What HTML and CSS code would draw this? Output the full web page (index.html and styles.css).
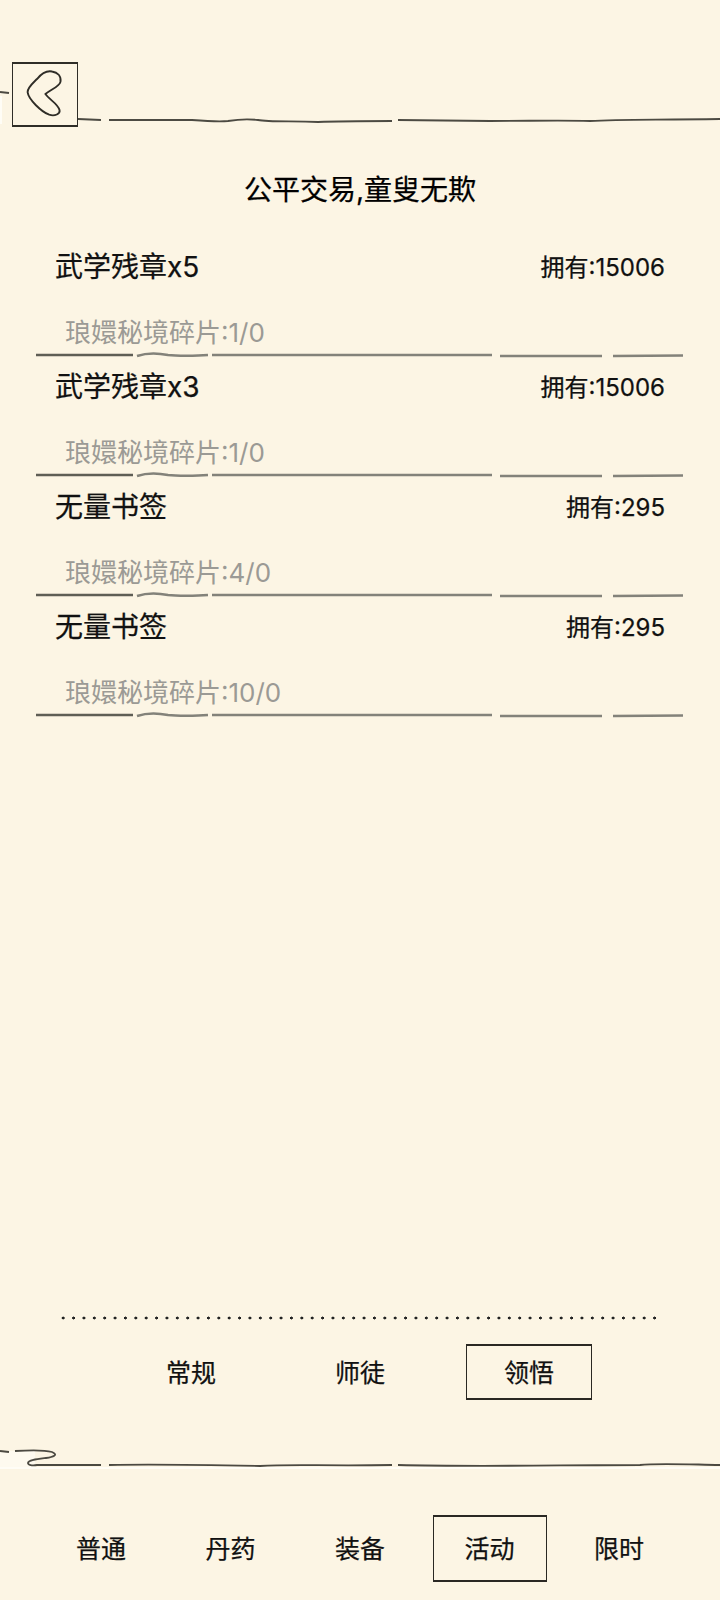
FILE: index.html
```html
<!doctype html>
<html lang="zh">

<head>
  <meta charset="utf-8">
  <title>公平交易</title>
  <link rel="stylesheet" href="styles.css">
</head>

<body>
  <div class="page">
    <div class="header">
      <svg class="header-line" viewBox="0 0 720 80" preserveAspectRatio="none">
        <path d="M0 37L9 38" />
        <path d="M78 64L101 65M109 65L192 65C205 66 218 67 228 66C240 64 250 64 258 65C268 67 290 66 318 67C340 66 360 66 392 66M398 65L490 66C530 66 560 65 590 66C620 64 650 65 720 64" />
      </svg>
      <button class="back-btn">
        <svg viewBox="0 0 66 66" width="63" height="62">
          <path class="chevron" d="M25 16C30 10 36 7 41 8C47 9 51 13 50 19C49 24 40 27 34 32C38 38 47 42 49 49C50 53 44 56 38 54C30 51 16 38 15 30C15 25 20 21 25 16Z" />
        </svg>
      </button>
    </div>

    <h1 class="title">公平交易,童叟无欺</h1>

    <div class="list">
      <div class="item">
        <div class="item-top">
          <span class="item-name">武学残章x5</span>
          <span class="item-own">拥有:15006</span>
        </div>
        <div class="item-cost">琅嬛秘境碎片:1/0</div>
        <svg class="item-line" viewBox="0 0 648 6" preserveAspectRatio="none">
          <path class="ink-bold" d="M0 3L97 3" />
          <path d="M101 4C110 1 122 1 132 3C140 4 160 4 172 3M176 3L456 3M464 4L566 4M577 4L647 3.500" />
        </svg>
      </div>
      <div class="item">
        <div class="item-top">
          <span class="item-name">武学残章x3</span>
          <span class="item-own">拥有:15006</span>
        </div>
        <div class="item-cost">琅嬛秘境碎片:1/0</div>
        <svg class="item-line" viewBox="0 0 648 6" preserveAspectRatio="none">
          <path class="ink-bold" d="M0 3L97 3" />
          <path d="M101 4C110 1 122 1 132 3C140 4 160 4 172 3M176 3L456 3M464 4L566 4M577 4L647 3.500" />
        </svg>
      </div>
      <div class="item">
        <div class="item-top">
          <span class="item-name">无量书签</span>
          <span class="item-own">拥有:295</span>
        </div>
        <div class="item-cost">琅嬛秘境碎片:4/0</div>
        <svg class="item-line" viewBox="0 0 648 6" preserveAspectRatio="none">
          <path class="ink-bold" d="M0 3L97 3" />
          <path d="M101 4C110 1 122 1 132 3C140 4 160 4 172 3M176 3L456 3M464 4L566 4M577 4L647 3.500" />
        </svg>
      </div>
      <div class="item">
        <div class="item-top">
          <span class="item-name">无量书签</span>
          <span class="item-own">拥有:295</span>
        </div>
        <div class="item-cost">琅嬛秘境碎片:10/0</div>
        <svg class="item-line" viewBox="0 0 648 6" preserveAspectRatio="none">
          <path class="ink-bold" d="M0 3L97 3" />
          <path d="M101 4C110 1 122 1 132 3C140 4 160 4 172 3M176 3L456 3M464 4L566 4M577 4L647 3.500" />
        </svg>
      </div>
    </div>

    <div class="dots"></div>

    <div class="sub-tabs">
      <div class="tab">常规</div>
      <div class="tab">师徒</div>
      <div class="tab active">领悟</div>
    </div>

    <div class="divider">
      <svg viewBox="0 0 720 20" preserveAspectRatio="none">
        <path d="M0 4L9 5M15 4C30 3 45 3 52 5C59 8 53 10 46 11C38 12 28 13 28 16C28 18 32 19 37 18L101 18M109 18C160 17 210 18 260 19C290 17 320 19 392 18M398 18C480 20 560 18 640 18C655 16 675 17 720 18" />
      </svg>
    </div>

    <div class="main-tabs">
      <div class="tab">普通</div>
      <div class="tab">丹药</div>
      <div class="tab">装备</div>
      <div class="tab active">活动</div>
      <div class="tab">限时</div>
    </div>
  </div>
</body>

</html>
```

FILE: styles.css
```css
body {
  margin: 0;
  background-color: #fcf5e4;
  color: #111;
  font-family: Inter, "Noto Sans CJK SC", sans-serif;
  -webkit-text-stroke: 0.25px;
}

.page {
  display: flex;
  flex-direction: column;
  height: 1600px;
  overflow: hidden;
  box-sizing: border-box;
}

svg {
  display: block;
  fill: none;
  stroke: #4c4a42;
  stroke-width: 1.800;
}

/* header */
.header {
  position: relative;
  height: 128px;
  padding: 62px 0 0 12px;
  box-sizing: border-box;
}

.header::before {
  content: " ";
  position: absolute;
  left: 0;
  top: 96px;
  width: 2px;
  height: 28px;
  background-color: #fffdf6;
}

.header-line {
  position: absolute;
  top: 55px;
  left: 0;
  width: 720px;
  height: 80px;
}

.back-btn {
  position: relative;
  display: block;
  width: 66px;
  height: 65px;
  padding: 0;
  background: none;
  border: 1.500px solid #2f2d27;
  border-top-width: 2px;
  border-bottom-width: 2px;
}

.chevron {
  stroke: #2f2d27;
  stroke-width: 2;
}

.title {
  margin: 45px 0 0;
  height: 34px;
  line-height: 34px;
  font-size: 28px;
  font-weight: 400;
  text-align: center;
  color: #000;
}

/* list */
.list {
  margin-top: 33px;
  height: 1076px;
}

.item {
  height: 120px;
  box-sizing: border-box;
  padding: 0 55px;
  position: relative;
}

.item-top {
  display: flex;
  justify-content: space-between;
  align-items: center;
  height: 50px;
}

.item-name {
  font-size: 28px;
}

.item-own {
  font-size: 24px;
}

.item-cost {
  margin: 28px 0 0 10px;
  height: 30px;
  line-height: 30px;
  font-size: 26px;
  color: #9b9a95;
  -webkit-text-stroke: 0;
}

.item-line {
  position: absolute;
  left: 36px;
  top: 112px;
  width: 648px;
  height: 6px;
  stroke: #83827a;
  stroke-width: 2.400;
}

.ink-bold {
  stroke: #5f5e55;
  stroke-width: 2.600;
}

/* tabs */
.dots {
  margin: 0 60px 0 58px;
  height: 4px;
  background-image: radial-gradient(circle, #222 1.300px, transparent 1.700px);
  background-size: 10.400px 4px;
  background-repeat: round;
}

.sub-tabs {
  display: flex;
  justify-content: center;
  gap: 43px;
  margin-top: 24px;
}

.tab {
  display: flex;
  align-items: center;
  justify-content: center;
  font-size: 25px;
  box-sizing: border-box;
}

.sub-tabs .tab {
  width: 126px;
  height: 56px;
  padding-bottom: 2px;
}

.tab.active {
  border: 1.500px solid #2a2823;
  border-top-width: 2px;
  border-bottom-width: 2.500px;
}

.divider {
  margin-top: 47px;
  border-bottom: 2px solid #fffdf6;
  background-image: linear-gradient(#fefaef, #fefaef);
  background-size: 35px 16px;
  background-position: left bottom;
  background-repeat: no-repeat;
}

.divider svg {
  width: 720px;
  height: 20px;
}

.main-tabs {
  display: flex;
  justify-content: center;
  gap: 15.500px;
  margin-top: 46px;
}

.main-tabs .tab {
  width: 114px;
  height: 67px;
  padding-bottom: 3px;
}
```
